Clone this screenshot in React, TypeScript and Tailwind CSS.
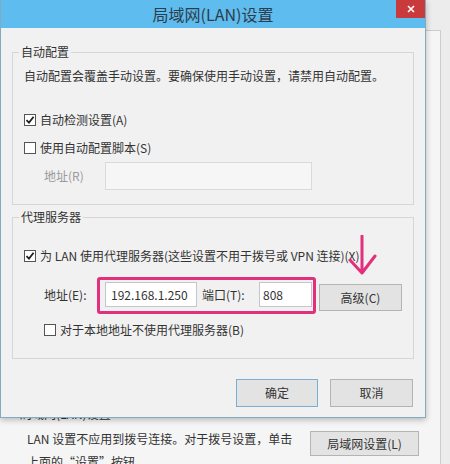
import React from "react";

const font = "font-['Microsoft_YaHei','Noto_Sans_CJK_SC',sans-serif]";

function CheckBox({ checked }: { checked?: boolean }) {
  return (
    <span className="flex h-[12px] w-[12px] shrink-0 items-center justify-center border border-[#555] bg-white">
      {checked && (
        <svg width="10" height="10" viewBox="0 0 10 10">
          <path d="M1.5 5.2 L4 7.6 L8.6 1.8" fill="none" stroke="#222" strokeWidth="1.8" />
        </svg>
      )}
    </span>
  );
}

function CheckRow({ checked, label, className = "" }: { checked?: boolean; label: string; className?: string }) {
  return (
    <div className={`flex h-[16px] items-center gap-[4px] whitespace-nowrap leading-[16px] ${className}`}>
      <CheckBox checked={checked} />
      <span>{label}</span>
    </div>
  );
}

function Group({ title, children, className = "" }: { title: string; children: React.ReactNode; className?: string }) {
  return (
    <fieldset className={`border border-[#d6d6d6] ${className}`}>
      <legend className="ml-[6px] px-[2px] leading-[16px]">{title}</legend>
      {children}
    </fieldset>
  );
}

function Button({ label, primary, className = "" }: { label: string; primary?: boolean; className?: string }) {
  return (
    <button
      className={`flex shrink-0 items-center justify-center whitespace-nowrap border bg-[#e3e3e3] leading-[16px] text-[#333] ${
        primary ? "border-[#7aaed3]" : "border-[#b4b4b4]"
      } ${className}`}
    >
      {label}
    </button>
  );
}

function LanDialog() {
  return (
    <div className="absolute left-0 top-0 z-10 w-[426px] border border-t-0 border-[#86a9c2] bg-[#f1f1f1] shadow-[0_2px_6px_rgba(0,0,0,0.25)]">
      <div className="relative flex h-[28px] items-center justify-center bg-[#5fbcee]">
        <span className="text-[16px] leading-[20px] text-[#2c3d4c]">局域网(LAN)设置</span>
        <div className="absolute right-0 top-0 flex h-[18px] w-[29px] items-center justify-center bg-[#c93a3c]">
          <svg width="8" height="8" viewBox="0 0 8 8">
            <path d="M1 1 L7 7 M7 1 L1 7" stroke="#fff" strokeWidth="1.6" />
          </svg>
        </div>
      </div>

      <div className="px-[11px] pb-[10px] pt-[16px]">
        <Group title="自动配置">
          <div className="pb-[14px] pl-[11px] pt-[8px]">
            <p className="whitespace-nowrap leading-[16px]">自动配置会覆盖手动设置。要确保使用手动设置，请禁用自动配置。</p>
            <CheckRow checked label="自动检测设置(A)" className="mt-[28px]" />
            <CheckRow label="使用自动配置脚本(S)" className="mt-[12px]" />
            <div className="mt-[6px] flex items-center">
              <span className="w-[81px] shrink-0 whitespace-nowrap pl-[20px] text-[#9a9a9a]">地址(R)</span>
              <div className="h-[28px] w-[207px] border border-[#dadada] bg-[#f6f6f6]" />
            </div>
          </div>
        </Group>

        <Group title="代理服务器" className="mt-[4px]">
          <div className="pb-[20px] pl-[11px] pt-[23px]">
            <CheckRow checked label="为 LAN 使用代理服务器(这些设置不用于拨号或 VPN 连接)(X)" />
            <div className="relative mt-[18px] flex items-start">
              <span className="w-[81px] shrink-0 whitespace-nowrap pl-[20px] leading-[25px]">地址(E):</span>
              <div className="flex h-[25px] w-[92px] shrink-0 items-center border border-[#c4c6cc] bg-white pl-[5px]">
                192.168.1.250
              </div>
              <span className="w-[62px] shrink-0 whitespace-nowrap pl-[5px] leading-[25px]">端口(T):</span>
              <div className="flex h-[25px] w-[53px] shrink-0 items-center border border-[#c4c6cc] bg-white pl-[3px]">
                808
              </div>
              <Button label="高级(C)" className="ml-[7px] mt-[2px] h-[27px] w-[83px]" />
              <div className="pointer-events-none absolute left-[73px] top-[-5px] h-[37px] w-[219px] rounded-[3px] border-[3px] border-[#e2307c]" />
              <svg
                className="pointer-events-none absolute left-[324px] top-[-47px]"
                width="30"
                height="42"
                viewBox="0 0 30 42"
              >
                <path d="M14 1 L14 38 M2 25 L14 38 L27 21" fill="none" stroke="#e2307c" strokeWidth="3" strokeLinecap="round" strokeLinejoin="round" />
              </svg>
            </div>
            <CheckRow label="对于本地地址不使用代理服务器(B)" className="ml-[20px] mt-[11px]" />
          </div>
        </Group>

        <div className="mt-[20px] flex justify-end gap-[12px] pr-[1px]">
          <Button primary label="确定" className="h-[28px] w-[82px]" />
          <Button label="取消" className="h-[28px] w-[83px]" />
        </div>
      </div>
    </div>
  );
}

export default function App() {
  return (
    <div className={`relative h-[464px] w-[450px] overflow-hidden bg-[#ececec] text-[12px] text-[#333] ${font}`}>
      <div className="mt-[30px] h-[434px] w-[441px] border-r border-t border-[#cdcdcd] bg-[#f5f5f5] pt-[375px]">
        <div className="pl-[20px] leading-[16px]">局域网(LAN)设置</div>
        <div className="mt-[5px] flex items-start pl-[27px]">
          <p className="w-[270px] shrink-0 whitespace-nowrap leading-[23px]">
            LAN 设置不应用到拨号连接。对于拨号设置，单击
            <br />
            上面的“设置”按钮。
          </p>
          <Button label="局域网设置(L)" className="ml-[13px] mt-[4px] h-[25px] w-[109px]" />
        </div>
      </div>
      <LanDialog />
    </div>
  );
}
